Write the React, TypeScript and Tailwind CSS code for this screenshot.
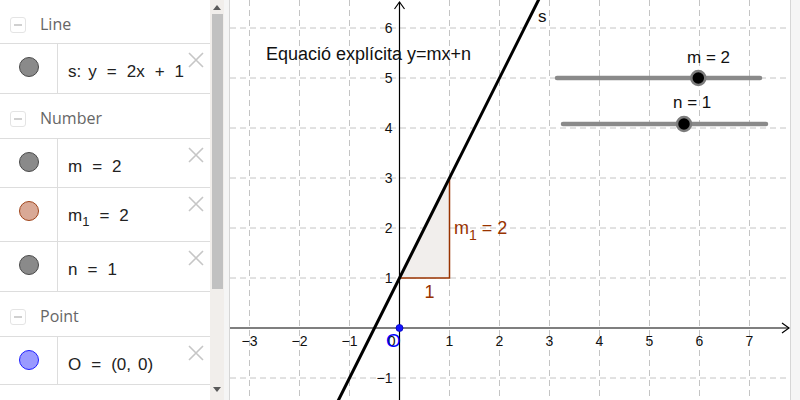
import React from 'react';

// graph view geometry (svg local coords, svg starts at page x=230)
const OX = 169.5;
const OY = 328;
const U = 50;
const W = 560;
const H = 400;

const px = (x: number) => OX + x * U;
const py = (y: number) => OY - y * U;

const GRID_X = [-3, -2, -1, 1, 2, 3, 4, 5, 6, 7];
const GRID_Y = [-1, 1, 2, 3, 4, 5, 6];

function MinusBox() {
  return (
    <span className="flex h-[16px] w-[16px] items-center justify-center rounded-[3px] border border-[#e4e4e4] bg-white">
      <span className="h-[2px] w-[8px] bg-[#d0d0d0]" />
    </span>
  );
}

function Header({ label, h }: { label: string; h: string }) {
  return (
    <div className={`flex shrink-0 items-start border-b border-[#dddddd] pl-[10px] ${h}`}>
      <div className="mt-[17px]">
        <MinusBox />
      </div>
      <span className="ml-[14px] mt-[12px] font-['Open_Sans',sans-serif] text-[16px] leading-[24px] text-[#666666]">
        {label}
      </span>
    </div>
  );
}

function CloseX() {
  return (
    <svg width="16" height="16" viewBox="0 0 16 16" className="mr-[6px] mt-[8px] shrink-0">
      <path d="M1 1 L15 15 M15 1 L1 15" stroke="#c6c6c6" strokeWidth="1.6" fill="none" />
    </svg>
  );
}

function Item({ dot, h, children }: { dot: string; h: string; children: React.ReactNode }) {
  return (
    <div className={`flex shrink-0 border-b border-[#dddddd] ${h}`}>
      <div className="flex w-[58px] shrink-0 justify-center border-r border-[#dddddd]">
        <span className={`mt-[13px] h-[20px] w-[20px] rounded-full border ${dot}`} />
      </div>
      <div className="flex flex-1 justify-between">
        <div className="whitespace-nowrap pl-[10px] pt-[18px] text-[17px] leading-[20px] text-[#222222]">{children}</div>
        <CloseX />
      </div>
    </div>
  );
}

const Op = ({ c }: { c: string }) => <span className="mx-[10px]">{c}</span>;
const Sub = ({ c }: { c: string }) => <span className="relative top-[5px] text-[13px]">{c}</span>;

function AlgebraView() {
  return (
    <div className="flex w-[210px] shrink-0 flex-col bg-white">
      <Header label="Line" h="h-[44px]" />
      <Item dot="bg-[#8a8a8a] border-[#4a4a4a]" h="h-[50px]">
        s:<span className="ml-[7px]">y</span>
        <Op c="=" />
        2x
        <Op c="+" />1
      </Item>
      <Header label="Number" h="h-[45px]" />
      <Item dot="bg-[#8a8a8a] border-[#4a4a4a]" h="h-[49px]">
        m<Op c="=" />2
      </Item>
      <Item dot="bg-[#d9a996] border-[#a0441a]" h="h-[54px]">
        m<Sub c="1" />
        <Op c="=" />2
      </Item>
      <Item dot="bg-[#8a8a8a] border-[#4a4a4a]" h="h-[50px]">
        n<Op c="=" />1
      </Item>
      <Header label="Point" h="h-[45px]" />
      <Item dot="bg-[#9a9aff] border-[#2020ff]" h="h-[48px]">
        O<Op c="=" />
        (0,<span className="ml-[7px]">0)</span>
      </Item>
    </div>
  );
}

function Scrollbar() {
  return (
    <div className="flex w-[14px] shrink-0 flex-col bg-[#f1eeeb]">
      <div className="flex h-[14px] items-center justify-center">
        <span className="h-0 w-0 border-x-[4px] border-b-[5px] border-x-transparent border-b-[#5a5a5a]" />
      </div>
      <div className="ml-[2px] mr-[1px] h-[275px] bg-[#c1c1c1]" />
      <div className="flex-1" />
      <div className="flex h-[22px] items-center justify-center">
        <span className="h-0 w-0 border-x-[4px] border-t-[5px] border-x-transparent border-t-[#5a5a5a]" />
      </div>
    </div>
  );
}

function Slider({ x1, x2, y, knob, label, lx, ly }: { x1: number; x2: number; y: number; knob: number; label: string; lx: number; ly: number }) {
  return (
    <g>
      <text x={lx} y={ly} fontSize="17" fill="#111">
        {label}
      </text>
      <line x1={x1} y1={y} x2={x2} y2={y} stroke="#8a8a8a" strokeWidth="4.5" strokeLinecap="round" />
      <circle cx={knob} cy={y} r="7" fill="#000" stroke="#7c7c7c" strokeWidth="2.5" />
    </g>
  );
}

function GraphicsView() {
  const brown = '#993300';
  return (
    <svg width={W} height={H} className="block shrink-0 bg-white" viewBox={`0 0 ${W} ${H}`}>
      {/* grid */}
      <g stroke="#c4c4c4" strokeWidth="1" strokeDasharray="6 4">
        {GRID_X.map(k => (
          <line key={'gx' + k} x1={px(k)} y1={0} x2={px(k)} y2={H} />
        ))}
        {GRID_Y.map(k => (
          <line key={'gy' + k} x1={0} y1={py(k)} x2={W} y2={py(k)} />
        ))}
      </g>

      {/* slope triangle */}
      <polygon points={`${px(0)},${py(1)} ${px(1)},${py(1)} ${px(1)},${py(3)}`} fill="#f1eeec" />

      {/* axes */}
      <g stroke="#000" strokeWidth="1.2" fill="none">
        <line x1={0} y1={OY} x2={W - 1} y2={OY} />
        <path d={`M${W - 8} ${OY - 5} L${W - 1} ${OY} L${W - 8} ${OY + 5}`} />
        <line x1={OX} y1={2} x2={OX} y2={H} />
        <path d={`M${OX - 5} 9 L${OX} 2 L${OX + 5} 9`} />
      </g>

      <polyline points={`${px(0)},${py(1)} ${px(1)},${py(1)} ${px(1)},${py(3)}`} fill="none" stroke={brown} strokeWidth="1.5" />

      {/* line s: y = 2x + 1 */}
      <line x1={px(-1.25)} y1={py(-1.5)} x2={px(2.85)} y2={py(6.7)} stroke="#000" strokeWidth="3" />

      {/* tick labels */}
      <g fontSize="14" fill="#111">
        {GRID_X.map(k => (
          <text key={'tx' + k} x={px(k)} y={346} textAnchor="middle">
            {k < 0 ? `\u2212${-k}` : k}
          </text>
        ))}
        {GRID_Y.map(k => (
          <text key={'ty' + k} x={OX - 7} y={py(k) + 5} textAnchor="end">
            {k < 0 ? `\u2212${-k}` : k}
          </text>
        ))}
        <text x={OX - 4} y={346} textAnchor="end">
          0
        </text>
      </g>

      <text x={308} y={22} fontSize="17" fill="#111">
        s
      </text>
      <text x={36} y={60} fontSize="18" fill="#111">
        Equació explícita y=mx+n
      </text>

      <text x={px(0.6)} y={298} fontSize="18" fill={brown} textAnchor="middle">
        1
      </text>
      <text x={224} y={234} fontSize="18" fill={brown}>
        m
        <tspan fontSize="14" dy="6">
          1
        </tspan>
        <tspan dy="-6"> = 2</tspan>
      </text>

      <Slider x1={327} x2={530} y={78} knob={468.3} label="m = 2" lx={457} ly={63} />
      <Slider x1={333} x2={536} y={124} knob={454} label="n = 1" lx={443} ly={108} />

      {/* point O */}
      <circle cx={OX} cy={OY} r="3.5" fill="#1414ff" stroke="#0000c0" strokeWidth="0.8" />
      <text x={156} y={347} fontSize="19" fill="#0000ff">
        O
      </text>
    </svg>
  );
}

export default function App() {
  return (
    <div className="flex h-[400px] w-[800px] overflow-hidden bg-white font-['Liberation_Sans',Arial,sans-serif]">
      <AlgebraView />
      <Scrollbar />
      <div className="w-[6px] shrink-0 border-r border-[#d6d6d6] bg-[#f5f5f5]" />
      <GraphicsView />
      <div className="w-[10px] shrink-0 border-l border-[#d6d6d6] bg-[#f5f5f5]" />
    </div>
  );
}
